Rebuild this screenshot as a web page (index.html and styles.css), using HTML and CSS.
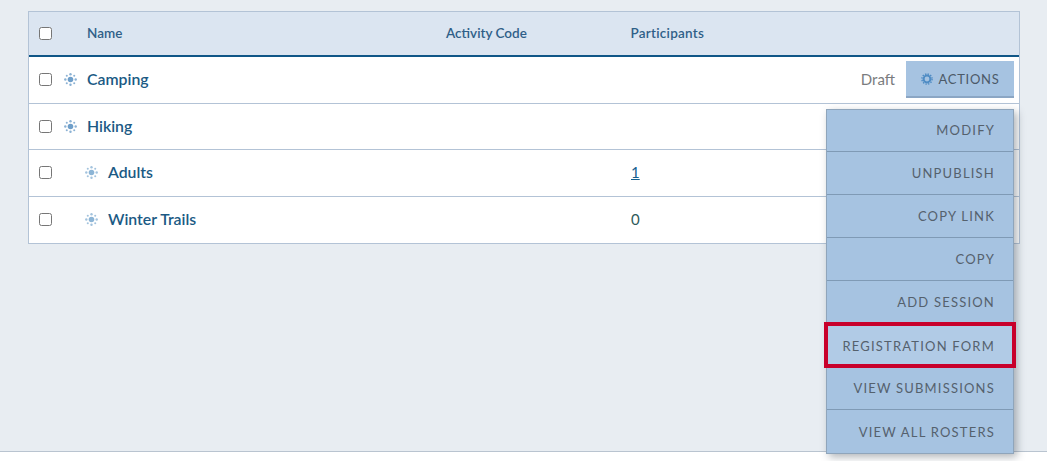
FILE: index.html
```html
<!DOCTYPE html>
<html lang="en">
<head>
    <meta charset="UTF-8">
    <meta name="viewport" content="width=device-width, initial-scale=1.0">
    <title>Activities</title>
    <link rel="stylesheet" href="styles.css">
</head>
<body>
    <svg class="sprites" width="0" height="0">
        <symbol id="dots" viewBox="0 0 14 14">
            <circle class="dot-core" cx="7" cy="7" r="3" fill="currentColor"/>
            <g fill="currentColor" opacity="0.8">
                <circle cx="7" cy="1.4" r="1.3"/>
                <circle cx="7" cy="12.6" r="1.3"/>
                <circle cx="1.4" cy="7" r="1.3"/>
                <circle cx="12.6" cy="7" r="1.3"/>
                <circle cx="3" cy="3" r="1.1"/>
                <circle cx="11" cy="3" r="1.1"/>
                <circle cx="3" cy="11" r="1.1"/>
                <circle cx="11" cy="11" r="1.1"/>
            </g>
        </symbol>
    </svg>
    <main class="content">
        <div class="list">
            <div class="row head">
                <span class="cell-check"><input type="checkbox"></span>
                <span class="cell-name">Name</span>
                <span class="cell-code">Activity Code</span>
                <span class="cell-count">Participants</span>
            </div>
            <div class="row">
                <span class="cell-check"><input type="checkbox"></span>
                <svg class="dots"><use href="#dots"/></svg>
                <span class="cell-name title">Camping</span>
                <span class="cell-status">
                    <span class="status">Draft</span>
                    <button class="actions"><svg class="gear" viewBox="0 0 12 12"><circle cx="6" cy="6" r="3.4" fill="none" stroke="currentColor" stroke-width="2"/><circle cx="6" cy="6" r="5.1" fill="none" stroke="currentColor" stroke-width="1.4" stroke-dasharray="1.4 1.27"/></svg>ACTIONS</button>
                </span>
            </div>
            <div class="row">
                <span class="cell-check"><input type="checkbox"></span>
                <svg class="dots"><use href="#dots"/></svg>
                <span class="cell-name title">Hiking</span>
            </div>
            <div class="row child">
                <span class="cell-check"><input type="checkbox"></span>
                <svg class="dots"><use href="#dots"/></svg>
                <span class="cell-name title">Adults</span>
                <span class="cell-count"><a href="#">1</a></span>
            </div>
            <div class="row child">
                <span class="cell-check"><input type="checkbox"></span>
                <svg class="dots"><use href="#dots"/></svg>
                <span class="cell-name title">Winter Trails</span>
                <span class="cell-count">0</span>
            </div>

            <ul class="menu">
                <li>MODIFY</li>
                <li>UNPUBLISH</li>
                <li>COPY LINK</li>
                <li>COPY</li>
                <li>ADD SESSION</li>
                <li class="marked">REGISTRATION FORM</li>
                <li>VIEW SUBMISSIONS</li>
                <li>VIEW ALL ROSTERS</li>
            </ul>
        </div>
    </main>
</body>
</html>
```

FILE: styles.css
```css
* { box-sizing: border-box; }
html, body { margin: 0; height: 461px; overflow: hidden; }
body { font-family: "Lato", "Noto Sans", sans-serif; background: #fff; color: #1f5a80; }
.sprites { position: absolute; }
.content { height: 452px; padding: 11px 27px 0 28px; background: #e8edf2; border-bottom: 1px solid #b9c4d0; }

.list { position: relative; border: 1px solid #b3c3d6; background: #fff; }
.row { display: flex; align-items: center; height: 46.5px; border-bottom: 1px solid #b3c3d6; font-size: 15px; }
.row:last-of-type { border-bottom: 0; }
.head { height: 45px; background: #dbe5f1; border-bottom: 2px solid #0f5687; font-size: 13.5px; font-weight: 600; color: #2f5f88; }
.head .cell-name { margin-left: 23px; padding-bottom: 2px; }
.head .cell-code, .head .cell-count { padding-bottom: 2px; }

.cell-check { width: 35px; padding-left: 10px; display: flex; }
input[type="checkbox"] { width: 13px; height: 13px; margin: 0; }
.dots { width: 13px; height: 13px; margin-left: 0; color: #6f9fca; }
.child .dots { margin-left: 21px; color: #8db5d6; }

.cell-name { width: 359px; margin-left: 10px; }
.child .cell-name { width: 523px; }
.row .title { font-size: 15.8px; font-weight: 600; color: #1b5a84; padding-bottom: 2px; }
.cell-code { width: 184.5px; }
.row:not(.head):not(.child) .title { width: auto; }
.cell-count { color: #2f5a5a; padding-bottom: 2px; }
.head .cell-count { color: #2f5f88; letter-spacing: 0.25px; }
.cell-count a { color: #14608f; }

.cell-status { margin-left: auto; margin-right: 5px; display: flex; align-items: center; gap: 11px; }
.status { color: #7a7c7e; padding-bottom: 2px; }
.actions { display: flex; align-items: center; justify-content: center; gap: 6px; width: 108px; height: 37px; padding: 1px 0 0; border: 0; border-bottom: 2px solid #8ba6c4; background: #a6c3e1; color: #4c5a68; font: 13px "Lato", sans-serif; letter-spacing: 0.7px; }
.gear { width: 12px; height: 12px; color: #4f8cc4; }

.menu { position: absolute; top: 97px; right: 5px; width: 188px; margin: 0; padding: 0; list-style: none; background: #a6c3e1; border: 1px solid #8fa5bb; box-shadow: 3px 3px 8px rgba(60, 70, 80, 0.4); }
.menu li { position: relative; height: 43px; padding: 0 18px 0 0; display: flex; align-items: center; justify-content: flex-end; border-bottom: 1px solid #7f9ab5; font-size: 13px; letter-spacing: 1.2px; color: #55616d; }
.menu li:first-child { height: 42px; padding-bottom: 1px; }
.menu li:last-child { border-bottom: 0; }
.menu .marked { background: #b1cbe6; border-bottom: 0; }
.menu .marked::after { content: ""; position: absolute; inset: -2px -3px -1px -3px; border: 4px solid #c8002b; }
```
